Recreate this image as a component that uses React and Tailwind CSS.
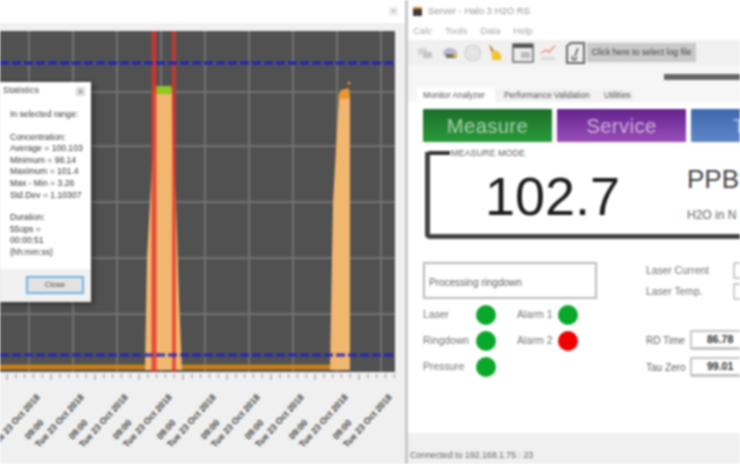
const FONT = "font-['Liberation_Sans',Arial,sans-serif]";

const GRID_X = [29, 73, 117, 161, 205, 249, 293, 337, 381];
const GRID_Y = [92, 146, 202, 258, 314];
const STAT_LINES = [
  ['In selected range:', 'mb-[11px]'],
  ['Concentration:', ''],
  ['Average = 100.103', ''],
  ['Minimum = 98.14', ''],
  ['Maximum = 101.4', ''],
  ['Max - Min = 3.26', ''],
  ['Std.Dev = 1.10307', 'mb-[11px]'],
  ['Duration:', ''],
  ['55ops =', ''],
  ['00:00:51', ''],
  ['(hh:mm:ss)', ''],
];

function Chart() {
  const labels = [-5, 39, 83, 127, 171, 215, 259, 303, 347];
  return (
    <svg width="405" height="433" viewBox="0 31 405 433" className="block">
      <rect x="0" y="31" width="395" height="341" fill="#515151" />
      {GRID_X.map((x) => (
        <line key={x} x1={x} x2={x} y1="31" y2="372" stroke="#727272" strokeWidth="2" />
      ))}
      {GRID_Y.map((y) => (
        <line key={y} x1="0" x2="395" y1={y} y2={y} stroke="#727272" strokeWidth="2" />
      ))}
      <path d="M153 92 L172 92 L173 146 L176 202 L179 300 L182 370 L145 370 L146 314 L147 258 L150 202 L153 146 Z" fill="#f2b76e" />
      <path d="M339 96 L350 96 L350 370 L330 370 L331 314 L333 202 Z" fill="#f2b76e" />
      <path d="M0 367 H145 M182 367 H330" stroke="#c77f17" strokeWidth="5" />
      <path d="M338 97 L341 90 L349 88 L350 99 L339 99 Z" fill="#e8982e" />
      <circle cx="349" cy="83" r="1.5" fill="#e8982e" />
      <rect x="154" y="86" width="18" height="8" rx="2" fill="#8fc81e" />
      <line x1="154" x2="154" y1="31" y2="372" stroke="#e0322a" strokeWidth="5" strokeOpacity="0.8" />
      <line x1="174" x2="174" y1="31" y2="372" stroke="#e0322a" strokeWidth="3.5" strokeOpacity="0.85" />
      <line x1="0" x2="395" y1="63" y2="63" stroke="#2020c0" strokeWidth="3" strokeDasharray="9 3" />
      <line x1="0" x2="395" y1="355" y2="355" stroke="#2020c0" strokeOpacity="0.8" strokeWidth="3.5" strokeDasharray="9 3" />
      {Array.from({ length: 45 }, (_, i) => (
        <line key={i} x1={7 + i * 8.8} x2={7 + i * 8.8} y1="374" y2={i % 5 === 0 ? 380 : 378} stroke="#8a8a8a" />
      ))}
      {labels.map((x) => (
        <text
          key={x}
          transform={`translate(${x} 448) rotate(-48)`}
          fontSize="9"
          fontWeight="700"
          fill="#444"
          fontFamily="Liberation Sans, Arial, sans-serif"
        >
          <tspan x="-1" y="-13">09:00</tspan>
          <tspan x="0" y="0">Tue 23 Oct 2018</tspan>
        </text>
      ))}
    </svg>
  );
}

function StatsDialog() {
  return (
    <div className="absolute left-0 top-[82px] w-[91px] h-[220px] bg-[#f0f0f0] shadow-[2px_2px_6px_rgba(0,0,0,0.45)] flex flex-col">
      <div className="h-[18px] bg-white flex items-center justify-between pl-[3px] pr-[6px] text-[9px] text-[#444]">
        <span>Statistics</span>
        <span className="w-[9px] h-[9px] bg-[#ddd] text-[7px] leading-[9px] text-center">×</span>
      </div>
      <div className="h-[169px] bg-white pl-[10px] pt-[9px] text-[8.6px] leading-[11.6px] text-[#333] whitespace-nowrap">
        {STAT_LINES.map(([line, cls]) => (
          <div key={line} className={cls}>{line}</div>
        ))}
      </div>
      <div className="flex-1 flex justify-end items-start pr-[7px] pt-[7px]">
        <button className="w-[58px] h-[18px] border-2 border-[#6db2e8] bg-[#e3e3e3] text-[8px] text-[#444] leading-none">
          Close
        </button>
      </div>
    </div>
  );
}

function LeftWindow() {
  return (
    <div className="relative w-[405px] shrink-0 bg-[#f0f0f0]">
      <div className="h-[23px] bg-white flex justify-end items-center pr-[7px]">
        <span className="w-[9px] h-[9px] bg-[#eeeeee] text-[9px] leading-[9px] text-center text-[#aaa]">×</span>
      </div>
      <div className="h-[8px] bg-[#f0f0f0]" />
      <Chart />
      <StatsDialog />
    </div>
  );
}

function ToolIcons() {
  return (
    <div className="flex items-center gap-[5px] pl-[9px]">
      <svg width="16" height="20" viewBox="0 0 16 20">
        <rect x="1" y="5" width="9" height="7" fill="#d5d5d5" />
        <rect x="6" y="9" width="9" height="6" fill="#c4c4c4" />
      </svg>
      <svg width="16" height="20" viewBox="0 0 16 20" className="ml-[4px]">
        <ellipse cx="8" cy="10" rx="7" ry="5" fill="#b9b9d6" />
        <rect x="4" y="11" width="10" height="4" fill="#77745a" />
        <rect x="11" y="11" width="4" height="3" fill="#d8b43c" />
      </svg>
      <svg width="19" height="20" viewBox="0 0 20 20">
        <circle cx="10" cy="10" r="8" fill="#e9e9e9" stroke="#cfcfcf" strokeWidth="1.5" />
        <circle cx="10" cy="10" r="4" fill="none" stroke="#d5d5d5" />
      </svg>
      <svg width="16" height="20" viewBox="0 0 18 20">
        <path d="M2 0 L8 7 L5 9 Z" fill="#b9762e" />
        <path d="M5 9 L11 7 L16 12 L16 18 L6 18 Z" fill="#f1c32f" />
      </svg>
      <svg width="22" height="20" viewBox="0 0 22 20" className="ml-[4px]">
        <rect x="1" y="1" width="20" height="18" fill="#ececec" stroke="#666" strokeWidth="1.5" />
        <rect x="1" y="1" width="20" height="4" fill="#555" />
        <rect x="9" y="9" width="9" height="6" fill="#bbb" />
      </svg>
      <svg width="18" height="20" viewBox="0 0 20 20">
        <path d="M2 10 L8 7 L11 9 L18 2" stroke="#ee8a6a" strokeWidth="1.5" fill="none" />
        <rect x="2" y="14" width="16" height="4" fill="#ddd" />
      </svg>
      <svg width="19" height="22" viewBox="0 0 19 22" className="ml-[4px]">
        <path d="M1 4 L5 1 H18 V21 H1 Z" fill="#eee" stroke="#666" strokeWidth="2" />
        <path d="M12 6 L9 14 M7 14 a2 2 0 1 0 3 1" stroke="#555" strokeWidth="1.5" fill="none" />
      </svg>
    </div>
  );
}

function ModeButton({ label, cls, width }) {
  return (
    <div className={`h-[33px] shrink-0 flex items-center justify-center rounded-[1px] text-[20px] tracking-[0.5px] text-white/60 ${width} ${cls}`}>
      {label}
    </div>
  );
}

function Lamp({ red }) {
  return <span className={`block w-[20px] h-[20px] rounded-full ${red ? 'bg-[#f00000]' : 'bg-[#0aa82a]'}`} />;
}

function Readout({ label, value }) {
  return (
    <div className="flex items-center h-[20px] text-[10px] text-[#666] whitespace-nowrap">
      <span className="w-[44px] shrink-0">{label}</span>
      <span className="w-[60px] h-[20px] shrink-0 border-2 border-b-[3px] border-[#c4c4c4] rounded-[2px] pl-[15px] font-bold text-[#333] text-[10.5px] leading-[15px]">
        {value}
      </span>
    </div>
  );
}

function RightWindow() {
  return (
    <div className="flex-1 min-w-0 overflow-hidden flex flex-col h-[464px] border-l-[3px] border-[#c8c8c8] bg-[#f0f0f0]">
      <div className="h-[22px] bg-white flex items-center gap-[6px] pl-[5px] text-[9.5px] text-[#999] shrink-0">
        <span className="w-[9px] h-[9px] bg-[#3a3a3a] border-t-2 border-[#f08a30]" />
        <span className="whitespace-nowrap">Server - Halo 3 H2O RS</span>
      </div>
      <div className="h-[18px] bg-white flex items-center gap-[13px] pl-[5px] text-[9.5px] text-[#aaa] shrink-0">
        <span>Calc</span><span>Tools</span><span>Data</span><span>Help</span>
      </div>
      <div className="h-[25px] bg-[#f0f0f0] flex items-center shrink-0 relative">
        <ToolIcons />
        <button className="ml-[2px] w-[109px] h-[19px] bg-[#c9c9c9] text-[8.6px] text-[#444] whitespace-nowrap">
          Click here to select log file
        </button>
      </div>
      <div className="h-[23px] bg-[#f6f6f6] flex justify-end pt-[9px] shrink-0">
        <div className="w-[76px] h-[6px] bg-[#666]" />
      </div>
      <div className="h-[14px] bg-[#f6f6f6] flex items-end pl-[9px] text-[8.3px] text-[#555] whitespace-nowrap shrink-0">
        <span className="w-[78px] h-[14px] bg-white flex items-center pl-[6px]">Monitor Analyzer</span>
        <span className="w-[104px] h-[13px] flex items-center pl-[9px] bg-[#f2f2f2]">Performance Validation</span>
        <span className="w-[36px] h-[13px] flex items-center pl-[5px] bg-[#f2f2f2]">Utilities</span>
      </div>

      <div className="flex-1 bg-white pl-[15px] pt-[7px] min-h-0">
        <div className="flex gap-[5px] w-[400px]">
          <ModeButton label="Measure" width="w-[129px]" cls="bg-gradient-to-b from-[#1c6f2a] to-[#2a9a3a]" />
          <ModeButton label="Service" width="w-[129px]" cls="bg-gradient-to-b from-[#66218e] to-[#9a4fb8]" />
          <ModeButton label="T" width="w-[129px] justify-start pl-[42px]" cls="bg-gradient-to-b from-[#3f68ad] to-[#5f88c8]" />
        </div>

        <div className="relative mt-[10px] ml-[2px] w-[400px] h-[87px] border-l-[5px] border-b-[5px] border-[#444] rounded-bl-[5px] flex">
          <span className="absolute -left-[3px] -top-[1px] w-[23px] h-[4px] bg-[#333] rounded-tl-[3px]" />
          <span className="absolute left-[21px] -top-[3px] text-[9px] leading-[8px] text-[#666] whitespace-nowrap">MEASURE MODE</span>
          <div className="w-[257px] pt-[12px] pl-[55px] text-[54px] leading-[64px] text-[#1c1c1c]">102.7</div>
          <div className="pt-[12px] text-[#444]">
            <div className="text-[26px] leading-[30px]">PPBv</div>
            <div className="mt-[15px] text-[12px] leading-[13px] text-[#666] whitespace-nowrap">H2O in N</div>
          </div>
        </div>

        <div className="mt-[23px] flex text-[10.3px] text-[#777]">
          <div className="w-[174px] shrink-0">
            <div className="h-[37px] border-2 border-[#bbb] flex items-center pl-[4px] pt-[3px] text-[10px] text-[#666]">
              Processing ringdown
            </div>
            <div className="mt-[3px] grid grid-cols-[53px_20px_21px_41px_20px] auto-rows-[26px] items-center whitespace-nowrap">
              <span>Laser</span><Lamp /><span /><span>Alarm 1</span><Lamp />
              <span>Ringdown</span><Lamp /><span /><span>Alarm 2</span><Lamp red />
              <span>Pressure</span><Lamp />
            </div>
          </div>
          <div className="ml-[49px] w-[120px] shrink-0 -mt-[2px]">
            <div className="flex items-center h-[21px] whitespace-nowrap">
              <span className="w-[87px] shrink-0">Laser Current</span>
              <span className="w-[7px] h-[17px] shrink-0 border-2 border-r-0 border-[#ccc] rounded-l-[2px]" />
            </div>
            <div className="flex items-center h-[21px] whitespace-nowrap">
              <span className="w-[87px] shrink-0">Laser Temp.</span>
              <span className="w-[7px] h-[17px] shrink-0 border-2 border-r-0 border-[#ccc] rounded-l-[2px]" />
            </div>
            <div className="mt-[28px]">
              <Readout label="RD Time" value="86.78" />
            </div>
            <div className="mt-[7px]">
              <Readout label="Tau Zero" value="99.01" />
            </div>
          </div>
        </div>
      </div>

      <div className="h-[31px] bg-[#f0f0f0] shrink-0 flex items-end pb-[2px] pl-[2px] text-[8.8px] text-[#666] whitespace-nowrap">
        Connected to 192.168.1.75 : 23
      </div>
    </div>
  );
}

export default function App() {
  return (
    <div className={`w-[740px] h-[464px] overflow-hidden bg-white ${FONT}`}>
      <div className="flex w-[740px] h-[464px] blur-[1.3px]">
        <LeftWindow />
        <RightWindow />
      </div>
    </div>
  );
}
